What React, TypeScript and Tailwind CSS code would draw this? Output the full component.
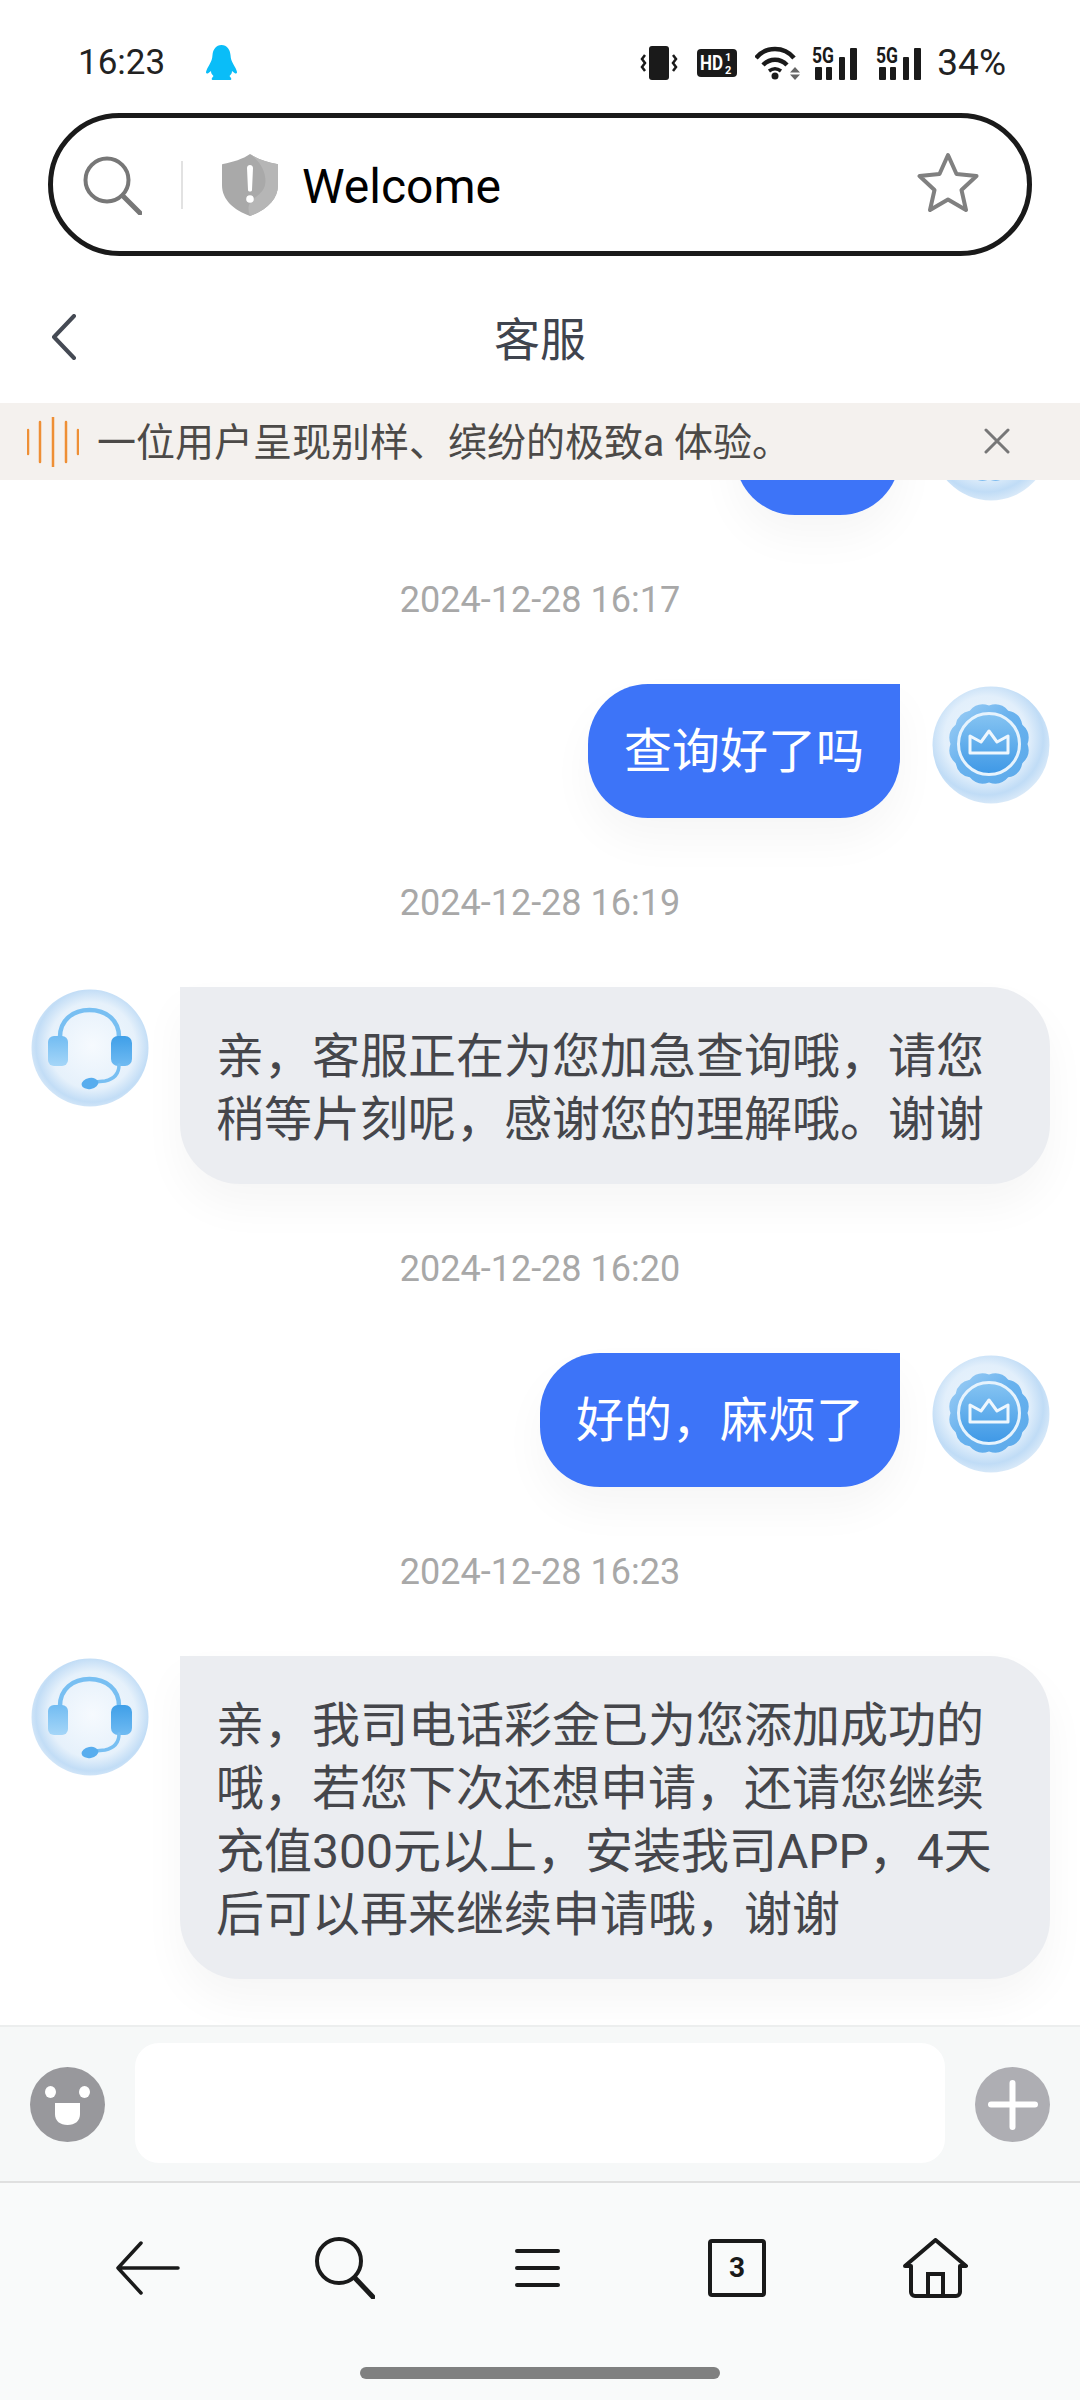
import React from 'react';

const TIME_FONT = 'font-["Roboto","Noto_Sans_CJK_SC",sans-serif]';

// scalloped badge edge, 12 bumps
const badgePath = (() => {
    const cx = 57;
    const cy = 58;
    const bumps = 12;
    let d = '';
    for (let i = 0; i < bumps; i++) {
        const a0 = (i / bumps) * Math.PI * 2;
        const a1 = ((i + 0.5) / bumps) * Math.PI * 2;
        const a2 = ((i + 1) / bumps) * Math.PI * 2;
        if (i === 0) d += `M${cx + 38.5 * Math.cos(a0)} ${cy + 38.5 * Math.sin(a0)}`;
        d += `Q${cx + 44 * Math.cos(a1)} ${cy + 44 * Math.sin(a1)} ${cx + 38.5 * Math.cos(a2)} ${cy + 38.5 * Math.sin(a2)}`;
    }
    return d + 'Z';
})();

const CrownAvatar = () => (
    <svg viewBox="0 0 118 118" className="w-[118px] h-[118px] shrink-0">
        <defs>
            <radialGradient id="crownBall" cx="46%" cy="44%" r="58%">
                <stop offset="0%" stopColor="#eef6fd" />
                <stop offset="62%" stopColor="#e2effb" />
                <stop offset="84%" stopColor="#c0dcf6" />
                <stop offset="100%" stopColor="#dcebf9" />
            </radialGradient>
            <linearGradient id="crownBadge" x1="0" y1="0" x2="1" y2="1">
                <stop offset="0%" stopColor="#a2d0f5" />
                <stop offset="45%" stopColor="#69b2ee" />
                <stop offset="100%" stopColor="#5ba9ea" />
            </linearGradient>
            <linearGradient id="crownDisk" x1="0" y1="0" x2="0" y2="1">
                <stop offset="0%" stopColor="#86c4f2" />
                <stop offset="100%" stopColor="#3e98e6" />
            </linearGradient>
        </defs>
        <circle cx="59" cy="59" r="58.500" fill="url(#crownBall)" />
        <path d={badgePath} fill="url(#crownBadge)" />
        <circle cx="57" cy="58" r="30.500" fill="url(#crownDisk)" stroke="#e6f3fd" strokeWidth="3" />
        <path d="M38 50l11 6 8-11 8 11 11-6v17H38z" fill="none" stroke="#eef7fe" strokeWidth="3" strokeLinejoin="round" />
    </svg>
);

const AgentAvatar = () => (
    <svg viewBox="0 0 118 118" className="w-[118px] h-[118px] shrink-0">
        <defs>
            <radialGradient id="agentBall" cx="52%" cy="48%" r="56%">
                <stop offset="0%" stopColor="#f6fafe" />
                <stop offset="66%" stopColor="#e6f1fb" />
                <stop offset="86%" stopColor="#c2ddf6" />
                <stop offset="100%" stopColor="#dcebf9" />
            </radialGradient>
            <linearGradient id="earLeft" x1="0" y1="0" x2="0" y2="1">
                <stop offset="0%" stopColor="#72bcf2" />
                <stop offset="100%" stopColor="#a5d6f8" />
            </linearGradient>
            <linearGradient id="earRight" x1="0" y1="0" x2="0" y2="1">
                <stop offset="0%" stopColor="#3f9fe8" />
                <stop offset="100%" stopColor="#70bbf2" />
            </linearGradient>
        </defs>
        <circle cx="59" cy="59" r="58.500" fill="url(#agentBall)" />
        <path d="M29 48C29 31 42 21 58.500 21S88 31 88 48" fill="none" stroke="#78bff2" strokeWidth="4.500" strokeLinecap="round" />
        <rect x="17" y="47" width="20" height="30" rx="6" fill="url(#earLeft)" />
        <rect x="80" y="47" width="21" height="30" rx="7" fill="url(#earRight)" />
        <path d="M88 76c0 9-5 14-14 16l-10 1" fill="none" stroke="#78bff2" strokeWidth="3.500" strokeLinecap="round" />
        <ellipse cx="59" cy="94.500" rx="8.500" ry="5.500" fill="#58adee" transform="rotate(-10 59 94.500)" />
    </svg>
);

const SignalIcon = ({ className }: { className: string }) => (
    <svg viewBox="0 0 47 34" className={`w-[47px] h-[34px] overflow-visible ${className}`}>
        <text x="0" y="17" fontFamily="Roboto" fontWeight="700" fontSize="22" textLength="22" lengthAdjust="spacingAndGlyphs" fill="#1a1a1a">5G</text>
        <rect x="3" y="21" width="7" height="13" rx="1" fill="#1a1a1a" />
        <rect x="14" y="21" width="6" height="13" rx="1" fill="#1a1a1a" />
        <rect x="27" y="11" width="6" height="23" rx="1" fill="#1a1a1a" />
        <rect x="38" y="2" width="7" height="32" rx="1" fill="#1a1a1a" />
    </svg>
);

const StatusIcons = () => (
    <div className="flex items-center">
        <svg viewBox="0 0 44 36" className="w-[44px] h-[36px]">
            <rect x="12" y="1" width="20" height="34" rx="3" fill="#1a1a1a" />
            <path d="M8 10l-3 4 3 4-3 4 3 4M36 10l3 4-3 4 3 4-3 4" fill="none" stroke="#1a1a1a" strokeWidth="2.500" />
        </svg>
        <svg viewBox="0 0 40 28" className="w-[40px] h-[28px] ml-[16px] overflow-visible">
            <rect width="40" height="28" rx="4" fill="#1a1a1a" />
            <text x="3" y="21" fontFamily="Roboto" fontWeight="700" fontSize="20" textLength="23" lengthAdjust="spacingAndGlyphs" fill="#fff">HD</text>
            <text x="28" y="12" fontFamily="Roboto" fontWeight="700" fontSize="11" fill="#fff">1</text>
            <text x="28" y="25" fontFamily="Roboto" fontWeight="700" fontSize="11" fill="#fff">2</text>
        </svg>
        <svg viewBox="0 0 46 36" className="w-[46px] h-[36px] ml-[18px]">
            <path d="M1 13C11 1 29 1 39 13" fill="none" stroke="#1a1a1a" strokeWidth="4.500" />
            <path d="M8 20c7-7 17-7 24 0" fill="none" stroke="#1a1a1a" strokeWidth="4.500" />
            <path d="M14 26c4-3 8-3 12 0" fill="none" stroke="#1a1a1a" strokeWidth="3.500" />
            <circle cx="20" cy="31" r="3.500" fill="#1a1a1a" />
            <path d="M40 22l5 5.500H35zM40 35l5-5.500H35z" fill="#666" />
        </svg>
        <SignalIcon className="ml-[11px]" />
        <SignalIcon className="ml-[17px]" />
        <span className={`ml-[14px] text-[37px] leading-none text-[#222] ${TIME_FONT}`}>34%</span>
    </div>
);

const Timestamp = ({ text }: { text: string }) => (
    <div className={`h-[169px] flex items-center justify-center text-[36px] text-[#a8a8a8] ${TIME_FONT}`}>
        {text}
    </div>
);

const UserRow = ({ text, className = '' }: { text: string; className?: string }) => (
    <div className={`flex justify-end items-start gap-[32px] pr-[30px] ${className}`}>
        <div className="h-[134px] flex items-center px-[36px] bg-[#3d74f8] text-white text-[48px] leading-[63px] rounded-[60px] rounded-tr-none shadow-[0_22px_44px_rgba(0,0,0,0.04)]">
            {text}
        </div>
        <div className="mt-[2px]">
            <CrownAvatar />
        </div>
    </div>
);

const AgentRow = ({ lines }: { lines: string[] }) => (
    <div className="flex items-start gap-[31px] pl-[31px] pr-[30px]">
        <div className="mt-[2px]">
            <AgentAvatar />
        </div>
        <div className="flex-1 pt-[38px] pb-[33px] pl-[36px] pr-[20px] bg-[#ebedf1] text-[#45464b] text-[48px] leading-[63px] rounded-[60px] rounded-tl-none shadow-[0_22px_44px_rgba(0,0,0,0.04)]">
            {lines.map((line) => (
                <div key={line} className="whitespace-nowrap">{line}</div>
            ))}
        </div>
    </div>
);

export default function App() {
    return (
        <div className={`w-[1080px] h-[2400px] flex flex-col bg-white overflow-hidden ${TIME_FONT}`}>
            {/* Status bar */}
            <div className="h-[113px] shrink-0 flex items-start justify-between pt-[44px] pl-[78px] pr-[74px]">
                <div className="flex items-center h-[36px]">
                    <span className="text-[35px] leading-none text-[#222]">16:23</span>
                    <svg viewBox="0 0 31 35" className="w-[31px] h-[35px] ml-[41px]">
                        <path
                            d="M15.500 0c5.500 0 8.500 4.500 9 10 .3 4 1 6 3 9.500 1.500 2.500 3 5 3.500 7.500.2 1.500-1 2-2.500 1l-2.500-2c0 2-.8 3.500-2.500 5l1.500 2c.6 1 .2 2-1 2H7c-1.200 0-1.600-1-1-2l1.500-2c-1.700-1.500-2.500-3-2.500-5l-2.500 2c-1.500 1-2.700.5-2.500-1 .5-2.500 2-5 3.500-7.500 2-3.500 2.700-5.500 3-9.500C7 4.500 10 0 15.500 0z"
                            fill="#0abdf8"
                        />
                    </svg>
                </div>
                <StatusIcons />
            </div>

            {/* Address bar */}
            <div className="h-[143px] shrink-0 mx-[48px] flex items-center border-[5px] border-[#1a1a1a] rounded-full pl-[29px] pr-[49px]">
                <svg viewBox="0 0 60 60" className="w-[60px] h-[60px] shrink-0">
                    <circle cx="25" cy="25" r="21.500" fill="none" stroke="#777" strokeWidth="4" />
                    <path d="M41 41l17 17" stroke="#777" strokeWidth="5" strokeLinecap="round" />
                </svg>
                <div className="w-[2px] h-[48px] bg-[#e2e2e2] ml-[39px]" />
                <svg viewBox="0 0 56 62" className="w-[56px] h-[62px] ml-[39px] shrink-0">
                    <path d="M28 0c7 5 17 8 27 10 .7 0 1 .5 1 1v20c0 15-12 25-28 31C12 56 0 46 0 31V11c0-.5.3-1 1-1 10-2 20-5 27-10z" fill="#a9a9a9" />
                    <path d="M28 0c7 5 17 8 27 10 .7 0 1 .5 1 1v20c0 15-12 25-28 31-6-18 8-16 14-28 4-9 0-24-14-34z" fill="#b6b6b6" />
                    <path d="M25 14c0-4 6-4 6 0l-1 22c0 2-4 2-4 0z" fill="#fff" />
                    <circle cx="28" cy="45" r="3.800" fill="#fff" />
                </svg>
                <span className="ml-[24px] mt-[5px] text-[48px] text-black leading-none">Welcome</span>
                <svg viewBox="0 0 62 60" className="w-[62px] h-[60px] ml-auto -mr-[1px] -mt-[6px] shrink-0">
                    <path d="M31 3l8.500 19 20 2-15 14 4.500 20-18-10.500L13 58l4.500-20-15-14 20-2z" fill="none" stroke="#808080" strokeWidth="4" strokeLinejoin="round" />
                </svg>
            </div>

            {/* Page header */}
            <div className="h-[147px] shrink-0 relative flex items-center justify-center">
                <svg viewBox="0 0 26 46" className="absolute left-[51px] top-[58px] w-[26px] h-[46px]">
                    <path d="M23 2L3 23l20 21" fill="none" stroke="#454a54" strokeWidth="4" strokeLinecap="round" strokeLinejoin="round" />
                </svg>
                <span className="text-[46px] text-[#3f444e] leading-none mt-[20px]">客服</span>
            </div>

            {/* Notice */}
            <div className="h-[77px] shrink-0 flex items-center bg-[#f4f1ee] relative z-10">
                <svg viewBox="0 0 52 50" className="w-[52px] h-[50px] ml-[27px] shrink-0">
                    {[[1, 13, 37], [13, 5, 45], [26, 0, 50], [39, 5, 45], [51, 13, 37]].map(([x, y1, y2]) => (
                        <line key={x} x1={x} x2={x} y1={y1} y2={y2} stroke="#ee8f35" strokeWidth="2.500" strokeLinecap="round" />
                    ))}
                </svg>
                <span className="ml-[18px] text-[39px] leading-[50px] text-[#4c4a48] mt-[2px]">一位用户呈现别样、缤纷的极致a 体验。</span>
                <svg viewBox="0 0 26 26" className="w-[26px] h-[26px] absolute left-[984px] top-[25px]">
                    <path d="M2 2l22 22M24 2L2 24" stroke="#777" strokeWidth="3" strokeLinecap="round" />
                </svg>
            </div>

            {/* Messages */}
            <div className="flex-1 min-h-0 overflow-hidden">
                <div className="mt-[-99px] flex flex-col">
                    <UserRow text="" className="[&>div:first-child]:w-[165px]" />
                    <Timestamp text="2024-12-28 16:17" />
                    <UserRow text="查询好了吗" />
                    <Timestamp text="2024-12-28 16:19" />
                    <AgentRow lines={['亲，客服正在为您加急查询哦，请您', '稍等片刻呢，感谢您的理解哦。谢谢']} />
                    <Timestamp text="2024-12-28 16:20" />
                    <UserRow text="好的，麻烦了" />
                    <Timestamp text="2024-12-28 16:23" />
                    <AgentRow lines={['亲，我司电话彩金已为您添加成功的', '哦，若您下次还想申请，还请您继续', '充值300元以上，安装我司APP，4天', '后可以再来继续申请哦，谢谢']} />
                </div>
            </div>

            {/* Input bar */}
            <div className="h-[158px] shrink-0 flex items-center gap-[30px] px-[30px] bg-[#f6f8f8] border-t-[2px] border-[#eceeee] border-b-[2px] border-b-[#e0e0e0]">
                <svg viewBox="0 0 75 75" className="w-[75px] h-[75px] shrink-0">
                    <circle cx="37.500" cy="37.500" r="37.500" fill="#98989c" />
                    <ellipse cx="20.500" cy="25" rx="5.500" ry="6" fill="#fff" />
                    <ellipse cx="54.500" cy="25" rx="5.500" ry="6" fill="#fff" />
                    <path d="M25 36h25v11c0 7-5 11-12.500 11S25 54 25 47z" fill="#fff" />
                </svg>
                <div className="flex-1 h-[120px] bg-white rounded-[24px] -mt-[2px]" />
                <svg viewBox="0 0 75 75" className="w-[75px] h-[75px] shrink-0">
                    <circle cx="37.500" cy="37.500" r="37.500" fill="#aeaeb3" />
                    <path d="M37.500 16v44M16 37.500h44" stroke="#fff" strokeWidth="6" strokeLinecap="round" />
                </svg>
            </div>

            {/* Browser toolbar */}
            <div className="h-[217px] shrink-0 relative bg-[#f9fafa]">
                <div className="flex items-center h-[62px] mt-[54px] pl-[115px]">
                    <svg viewBox="0 0 65 54" className="w-[65px] h-[54px] shrink-0">
                        <path d="M26 2L3 27l23 25M3 27h60" fill="none" stroke="#1a1a1a" strokeWidth="3.500" strokeLinecap="round" strokeLinejoin="round" />
                    </svg>
                    <svg viewBox="0 0 60 62" className="w-[60px] h-[62px] ml-[135px] shrink-0">
                        <circle cx="24" cy="24" r="22" fill="none" stroke="#1a1a1a" strokeWidth="4" />
                        <path d="M40 41l18 19" stroke="#1a1a1a" strokeWidth="5" strokeLinecap="round" />
                    </svg>
                    <div className="w-[45px] h-[38px] ml-[140px] shrink-0 flex flex-col justify-between">
                        <div className="h-[4px] bg-[#1a1a1a] rounded-full" />
                        <div className="h-[4px] bg-[#1a1a1a] rounded-full" />
                        <div className="h-[4px] bg-[#1a1a1a] rounded-full" />
                    </div>
                    <div className="w-[58px] h-[58px] ml-[148px] shrink-0 flex items-center justify-center border-[4px] border-[#1a1a1a] rounded-[4px] text-[28px] font-bold text-[#1a1a1a] leading-none">
                        3
                    </div>
                    <svg viewBox="0 0 65 60" className="w-[65px] h-[60px] ml-[137px] shrink-0">
                        <path d="M2 28L32.500 2 63 28h-6v26a4 4 0 0 1-4 4H12a4 4 0 0 1-4-4V28z" fill="none" stroke="#1a1a1a" strokeWidth="4" strokeLinejoin="round" />
                        <path d="M25 58V36h15v22" fill="none" stroke="#1a1a1a" strokeWidth="4" />
                    </svg>
                </div>
                {/* Home indicator */}
                <div className="absolute left-[360px] top-[184px] w-[360px] h-[12px] rounded-full bg-[#808080]" />
            </div>
        </div>
    );
}
